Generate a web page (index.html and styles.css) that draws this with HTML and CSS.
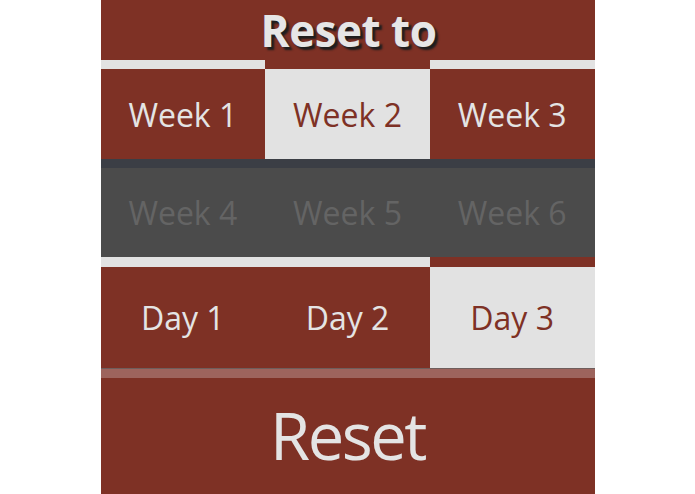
FILE: index.html
```html
<!DOCTYPE html>
<html>
<head>
<meta charset="utf-8">
<link rel="stylesheet" href="styles.css">
</head>
<body>
<div class="app">
  <div class="title">Reset to</div>
  <div class="row row-week">
    <div class="cell">Week 1</div>
    <div class="cell sel">Week 2</div>
    <div class="cell">Week 3</div>
  </div>
  <div class="row row-week disabled">
    <div class="cell">Week 4</div>
    <div class="cell">Week 5</div>
    <div class="cell">Week 6</div>
  </div>
  <div class="row row-day">
    <div class="cell">Day 1</div>
    <div class="cell">Day 2</div>
    <div class="cell sel">Day 3</div>
  </div>
  <div class="reset">Reset</div>
</div>
</body>
</html>
```

FILE: styles.css
```css
html, body {
  margin: 0;
  padding: 0;
  background: #ffffff;
}
body {
  font-family: "Open Sans", "Noto Sans", sans-serif;
}
.app {
  width: 494px;
  height: 494px;
  margin: 0 auto;
  background: #7e3125;
  display: flex;
  flex-direction: column;
}
.title {
  height: 60px;
  display: flex;
  align-items: center;
  justify-content: center;
  color: #e6e6e6;
  font-weight: 700;
  font-size: 44px;
  letter-spacing: -0.5px;
  text-shadow: 3px 3px 2px #1e1e1e;
  padding-left: 2px;
}
.row {
  display: grid;
  grid-template-columns: 1fr 1fr 1fr;
}
.cell {
  display: flex;
  align-items: center;
  justify-content: center;
  background: #7e3125;
  color: #e4e4e4;
  border-top: 9px solid #e2e2e2;
  font-size: 32px;
  height: 90px;
}
.cell.sel {
  background: #e2e2e2;
  color: #7e3125;
  border-top-color: #7e3125;
}
.disabled .cell {
  background: #4b4b4b;
  color: #646464;
  border-top-color: #3b3e45;
  height: 89px;
}
.row-day .cell {
  border-top-width: 10px;
  height: 101px;
  border-bottom: 1px solid #6f5e5c;
}
.reset {
  flex: 1;
  display: flex;
  align-items: center;
  justify-content: center;
  border-top: 9px solid #9d645d;
  color: #e4e4e4;
  font-size: 65px;
  letter-spacing: -2.5px;
  padding-bottom: 2px;
}
```
